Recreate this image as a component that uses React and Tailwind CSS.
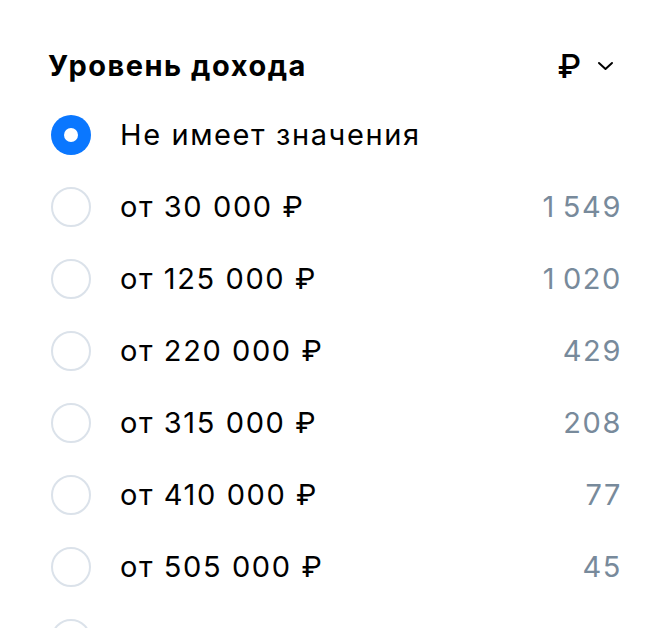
import React, { useState } from "react";

// counts use a thin space between thousands
const options = [
  { id: "any", label: "Не имеет значения", count: null },
  { id: "30", label: "от 30 000 ₽", count: "1\u2009549" },
  { id: "125", label: "от 125 000 ₽", count: "1\u2009020" },
  { id: "220", label: "от 220 000 ₽", count: "429" },
  { id: "315", label: "от 315 000 ₽", count: "208" },
  { id: "410", label: "от 410 000 ₽", count: "77" },
  { id: "505", label: "от 505 000 ₽", count: "45" },
  { id: "custom", label: "Своя сумма", count: null },
];

const Radio = ({ checked }) =>
  checked ? (
    <span className="flex h-10 w-10 shrink-0 items-center justify-center rounded-full bg-[#0a77ff]">
      <span className="h-[14px] w-[14px] rounded-full bg-white" />
    </span>
  ) : (
    <span className="h-10 w-10 shrink-0 rounded-full border-2 border-[#dbe2ea] bg-white" />
  );

const App = () => {
  const [selected, setSelected] = useState("any");

  return (
    <div
      className="h-[628px] overflow-hidden bg-white pl-12 pr-10 pt-[46px] text-black"
      style={{ fontFamily: "Inter, 'Noto Sans', sans-serif" }}
    >
      <div className="flex items-center justify-between">
        <h2 className="text-[29px] font-bold leading-10 tracking-[1.5px]">Уровень дохода</h2>
        <button className="flex items-center gap-4 pr-[6px]">
          <span className="text-[33px] font-medium leading-10">₽</span>
          <svg width="17" height="10" viewBox="0 0 17 10" fill="none">
            <path d="M2 2l6.5 6 6.5-6" stroke="#000" strokeWidth="2" strokeLinecap="round" strokeLinejoin="round" />
          </svg>
        </button>
      </div>

      <ul className="ml-[3px] mt-[29px] flex flex-col gap-8">
        {options.map((o) => (
          <li
            key={o.id}
            onClick={() => setSelected(o.id)}
            className="flex h-10 cursor-pointer items-center"
          >
            <Radio checked={selected === o.id} />
            <span className="ml-[29px] flex-1 text-[29px] leading-10 tracking-[1.6px]">{o.label}</span>
            {o.count && (
              <span className="-mr-[2px] text-[29px] leading-10 tracking-[1.6px] text-[#788a9b]">
                {o.count}
              </span>
            )}
          </li>
        ))}
      </ul>
    </div>
  );
};

export default App;
